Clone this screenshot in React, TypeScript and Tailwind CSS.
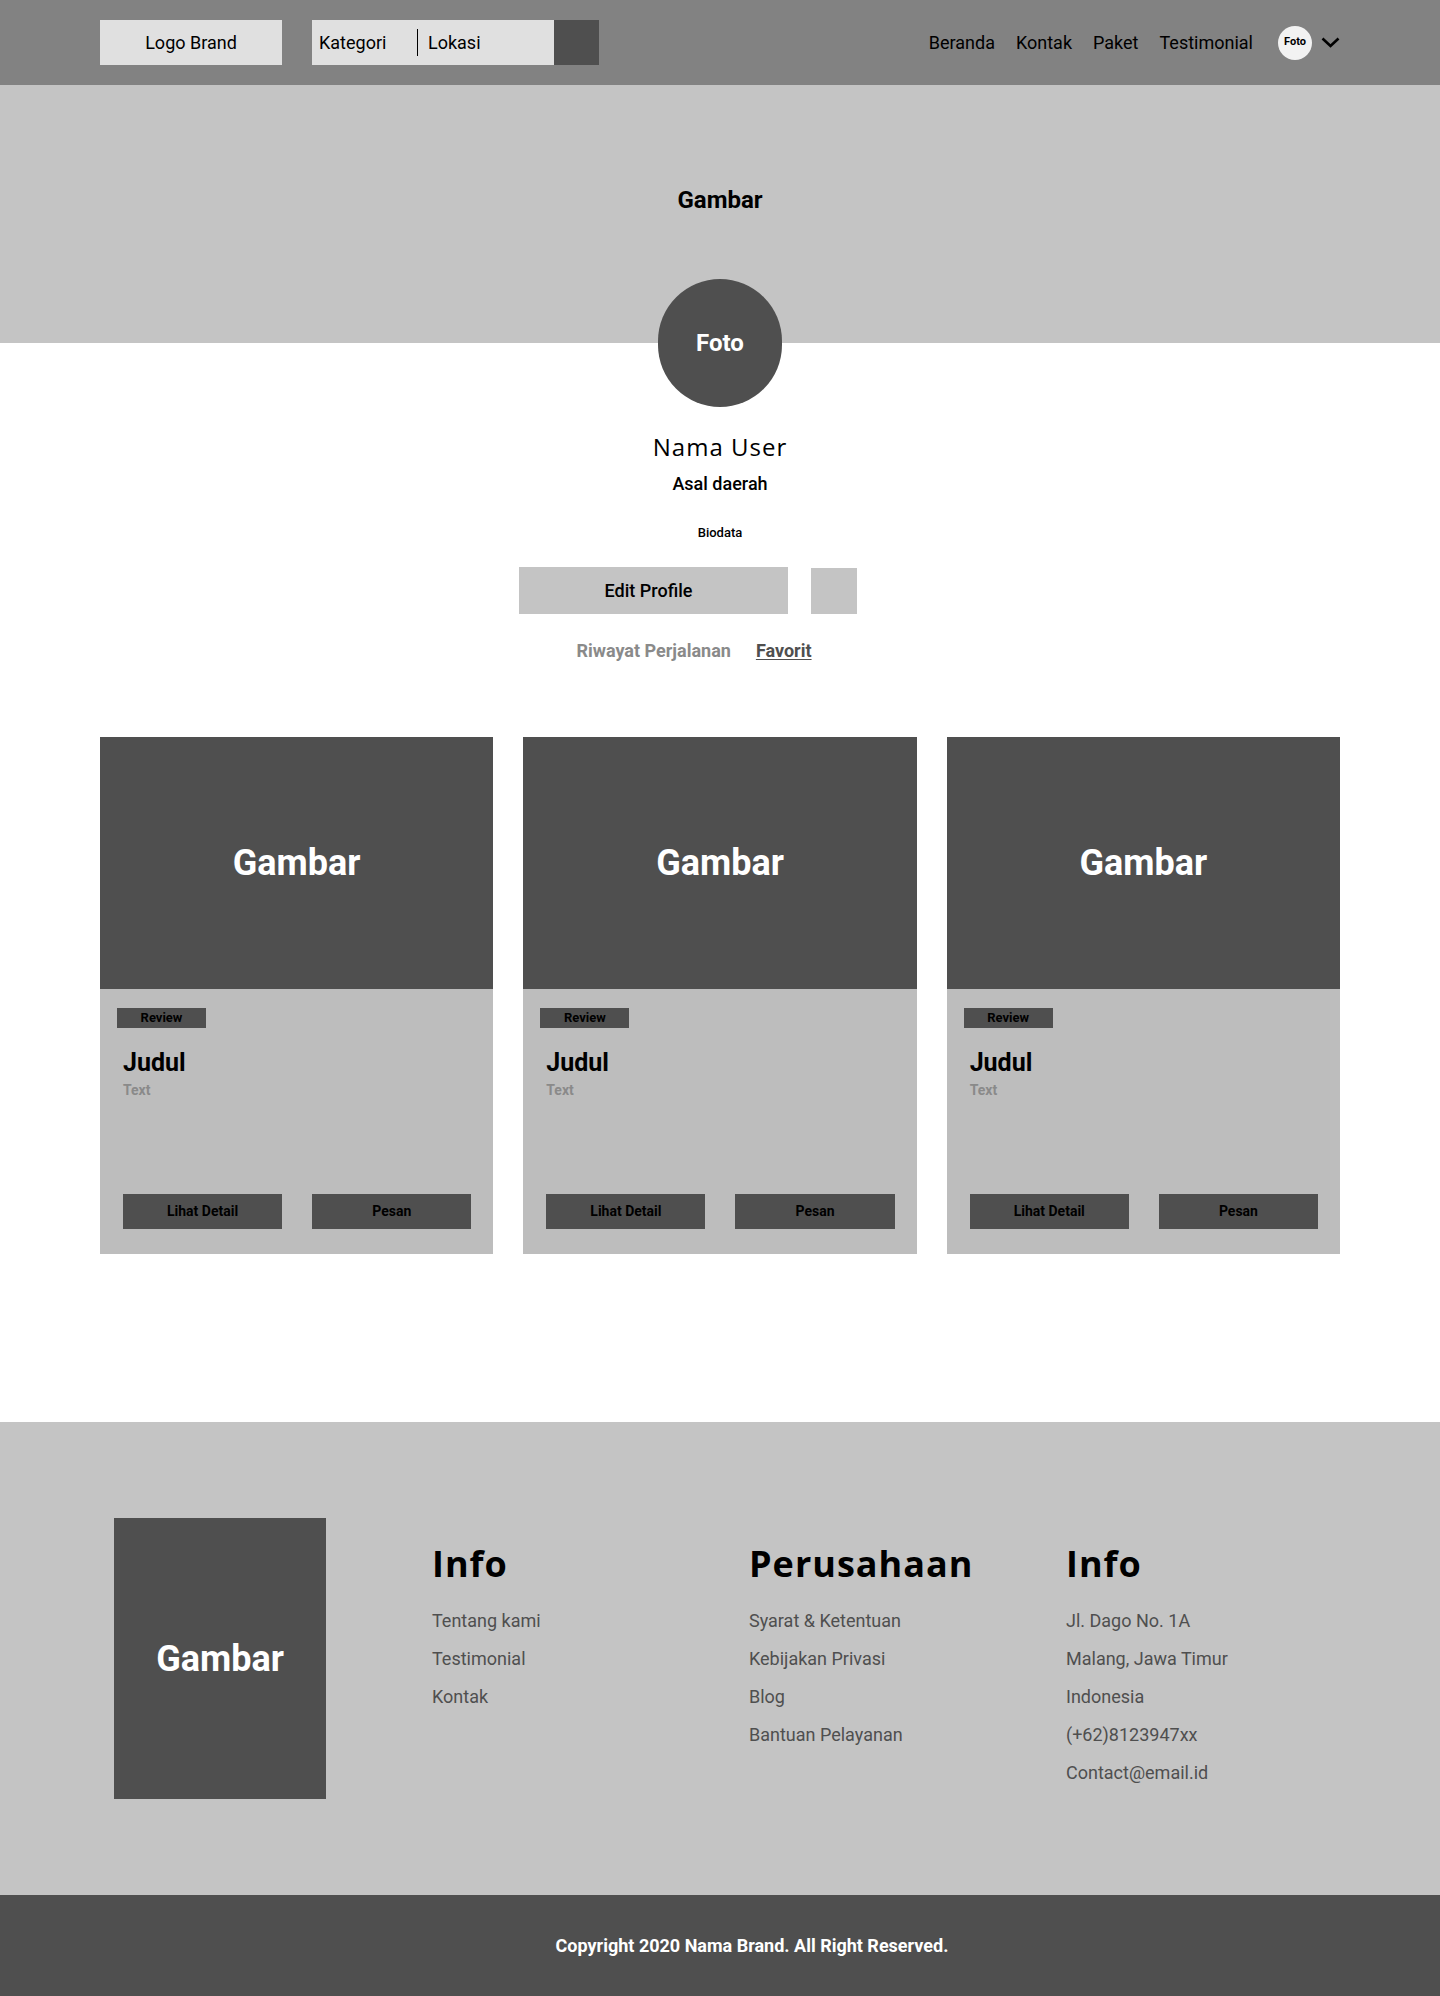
import React from 'react';

const roboto = { fontFamily: 'Roboto, "Noto Sans", sans-serif' };

const navLinks = ['Beranda', 'Kontak', 'Paket', 'Testimonial'];

const footerCols = [
  { title: 'Info', items: ['Tentang kami', 'Testimonial', 'Kontak'] },
  { title: 'Perusahaan', items: ['Syarat & Ketentuan', 'Kebijakan Privasi', 'Blog', 'Bantuan Pelayanan'] },
  {
    title: 'Info',
    items: ['Jl. Dago No. 1A', 'Malang, Jawa Timur', 'Indonesia', '(+62)8123947xx', 'Contact@email.id'],
  },
];

const Header: React.FC = () => (
  <header className="h-[85px] bg-[#828282] flex items-center justify-between px-[100px]">
    <div className="flex items-center gap-[30px]">
      <div className="w-[182px] h-[45px] bg-[#e0e0e0] flex items-center justify-center text-[18px] text-black">
        Logo Brand
      </div>
      <div className="flex h-[45px]">
        <div className="w-[242px] bg-[#e0e0e0] flex items-center text-[18px] text-black">
          <span className="pl-[7px] w-[105px]">Kategori</span>
          <span className="w-px h-[27px] bg-black"></span>
          <span className="pl-[10px]">Lokasi</span>
        </div>
        <div className="w-[45px] bg-[#4f4f4f]"></div>
      </div>
    </div>
    <div className="flex items-center">
      <nav className="flex items-center gap-[21px] text-[18px] text-black">
        {navLinks.map((l) => (
          <a key={l} href="#">
            {l}
          </a>
        ))}
      </nav>
      <div className="ml-[25px] w-[34px] h-[34px] rounded-full bg-[#f2f2f2] flex items-center justify-center text-[11px] font-bold text-black">
        Foto
      </div>
      <svg className="ml-[9px]" width="19" height="11" viewBox="0 0 19 11" fill="none">
        <path d="M1.5 1.5L9.5 9L17.5 1.5" stroke="black" strokeWidth="2.6" />
      </svg>
    </div>
  </header>
);

const Card: React.FC = () => (
  <div className="flex flex-col">
    <div className="h-[252px] bg-[#4f4f4f] flex items-center justify-center text-white text-[36px] font-bold">
      Gambar
    </div>
    <div className="h-[265px] bg-[#bdbdbd] flex flex-col pt-[19px] pb-[25px] pl-[17px] pr-[22px]">
      <div className="w-[89px] h-[20px] bg-[#4f4f4f] flex items-center justify-center text-[13px] font-bold text-black">
        Review
      </div>
      <h3 className="mt-[20px] pl-[6px] text-[25px] leading-[30px] font-bold text-black">Judul</h3>
      <p className="mt-[4px] pl-[6px] text-[14px] leading-[16px] font-bold text-[#8a8a8a]">Text</p>
      <div className="mt-auto pl-[6px] grid grid-cols-2 gap-[30px]">
        <button className="h-[35px] bg-[#4f4f4f] text-[14px] font-bold text-black">Lihat Detail</button>
        <button className="h-[35px] bg-[#4f4f4f] text-[14px] font-bold text-black">Pesan</button>
      </div>
    </div>
  </div>
);

const Footer: React.FC = () => (
  <footer>
    <div className="bg-[#c4c4c4] pt-[96px] pb-[96px] pl-[114px] flex">
      <div className="w-[212px] h-[281px] bg-[#4f4f4f] flex items-center justify-center text-white text-[36px] font-bold">
        Gambar
      </div>
      <div className="ml-[106px] flex pt-[24px]">
        {footerCols.map((col, i) => (
          <div key={i} className="w-[317px]">
            <h4
              className="text-[36px] leading-[44px] font-bold text-black tracking-[1px]"
              style={{ fontFamily: '"Open Sans", sans-serif' }}
            >
              {col.title}
            </h4>
            <ul className="mt-[16px]">
              {col.items.map((it) => (
                <li key={it} className="text-[18px] leading-[38px] text-[#4f4f4f]">
                  {it}
                </li>
              ))}
            </ul>
          </div>
        ))}
      </div>
    </div>
    <div className="h-[101px] bg-[#4f4f4f] flex items-center justify-center pl-[64px] text-white text-[18px] font-bold">
      Copyright 2020 Nama Brand. All Right Reserved.
    </div>
  </footer>
);

export default function App() {
  return (
    <div className="w-[1440px] bg-white" style={roboto}>
      <Header />

      <section className="h-[258px] bg-[#c4c4c4] pt-[101px] flex justify-center">
        <h1 className="text-[24px] leading-[28px] font-bold text-black">Gambar</h1>
      </section>

      <div className="flex flex-col items-center">
        <div className="-mt-[64px] w-[124px] h-[128px] rounded-full bg-[#4f4f4f] flex items-center justify-center text-white text-[24px] font-bold">
          Foto
        </div>
        <h2
          className="mt-[24px] text-[24px] leading-[32px] text-black tracking-[1px]"
          style={{ fontFamily: '"Open Sans", sans-serif' }}
        >
          Nama User
        </h2>
        <p className="mt-[9px] text-[18px] leading-[24px] font-medium text-black">Asal daerah</p>
        <p className="mt-[29px] text-[13px] leading-[16px] font-medium text-black">Biodata</p>
        <div className="mt-[26px] flex gap-[23px] mr-[64px]">
          <button className="w-[269px] h-[47px] pr-[10px] bg-[#c4c4c4] text-[18px] font-medium text-black">
            Edit Profile
          </button>
          <div className="w-[46px] h-[46px] mt-px bg-[#c4c4c4]"></div>
        </div>
        <div className="mt-[25px] flex gap-[25px] mr-[52px] text-[18px] leading-[24px] font-bold">
          <span className="text-[#8a8a8a]">Riwayat Perjalanan</span>
          <span className="text-[#4f4f4f] underline underline-offset-2">Favorit</span>
        </div>
      </div>

      <section className="mt-[74px] px-[100px] grid grid-cols-3 gap-[30px]">
        <Card />
        <Card />
        <Card />
      </section>

      <div className="h-[168px]"></div>

      <Footer />
    </div>
  );
}
